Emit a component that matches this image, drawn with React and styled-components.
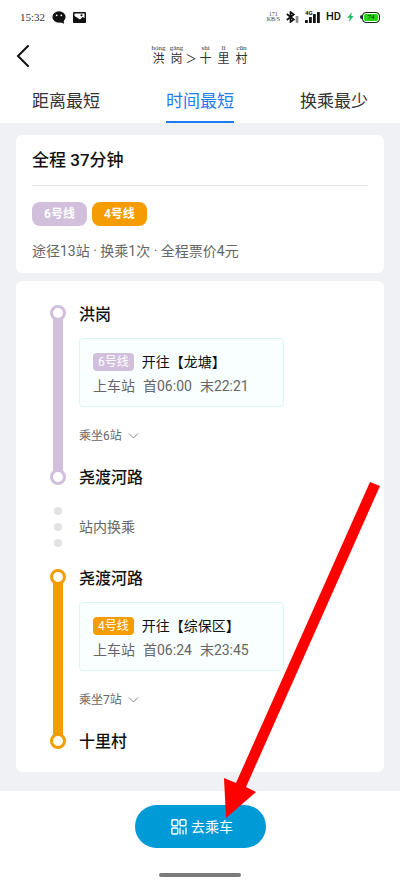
import styled, { createGlobalStyle } from "styled-components";

const GlobalStyle = createGlobalStyle`
  * {
    box-sizing: border-box;
  }
  body {
    margin: 0;
    background: #fff;
    color: #111;
    font-family: Roboto, "Noto Sans CJK SC", sans-serif;
    font-size: 14px;
    line-height: 20px;
  }
  button {
    margin: 0;
    padding: 0;
    border: 0;
    background: none;
    color: inherit;
    font: inherit;
    cursor: pointer;
  }
  h1, h2, h3, p {
    margin: 0;
    font-weight: inherit;
  }
  svg {
    display: block;
    flex: none;
  }
`;

const Page = styled.div`
  position: relative;
  display: flex;
  flex-direction: column;
  min-height: 100vh;
`;

const StatusBar = styled.div`
  display: flex;
  align-items: center;
  justify-content: space-between;
  height: 34px;
  padding: 0 20px;
`;

const StatusGroup = styled.div`
  display: flex;
  align-items: center;
  gap: ${(p) => p.$gap}px;
`;

const Clock = styled.span`
  font: 11px/16px "Liberation Serif", serif;
  color: #333;
`;

const NetSpeed = styled.span`
  display: flex;
  flex-direction: column;
  align-items: center;
  font: 6px/5px "Liberation Serif", serif;
  color: #444;
`;

const Signal = styled.span`
  position: relative;
  span {
    position: absolute;
    left: 0;
    top: -1px;
    font: bold 6px/6px Roboto, sans-serif;
  }
`;

const Hd = styled.span`
  font: 500 11px/16px Roboto, sans-serif;
  color: #111;
`;

const Battery = styled.span`
  display: flex;
  align-items: center;
  span {
    display: flex;
    align-items: center;
    justify-content: center;
    width: 18px;
    height: 11px;
    border: 1px solid #222;
    border-radius: 4px;
    background: #22d80e;
    box-shadow: inset 0 0 0 1px #fff;
    font: 7px/8px "Liberation Serif", serif;
  }
  &::before {
    content: "";
    width: 2px;
    height: 4px;
    border-radius: 2px 0 0 2px;
    background: #222;
  }
`;

const Header = styled.header`
  display: grid;
  grid-template-columns: 1fr auto 1fr;
  align-items: center;
  height: 43px;
  padding: 0 16px;
`;

const Title = styled.h1`
  display: flex;
  align-items: flex-end;
  font: 12px/14px "Liberation Serif", "Noto Sans CJK SC", serif;
  color: #333;
`;

const Pinyin = styled.ruby`
  display: flex;
  flex-direction: column-reverse;
  align-items: center;
  width: 18px;
  rt {
    display: block;
    font-size: 7px;
    line-height: 7px;
  }
`;

const Separator = styled.span`
  width: 11px;
  text-align: center;
  font-size: 18px;
`;

const Tabs = styled.nav`
  display: flex;
  justify-content: space-between;
  height: 46px;
  padding: 0 32px;
`;

const Tab = styled.button`
  padding-top: 4px;
  border-bottom: 2px solid ${(p) => (p.$active ? "#1f7cf2" : "transparent")};
  color: ${(p) => (p.$active ? "#1f7cf2" : "#333")};
  font-size: 17px;
  line-height: 24px;
`;

const Main = styled.main`
  display: flex;
  flex: 1;
  flex-direction: column;
  gap: 8px;
  padding: 12px 16px 19px;
  background: #f0f1f5;
`;

const Card = styled.section`
  border-radius: 6px;
  background: #fff;
`;

const Summary = styled(Card)`
  padding: 0 16px 12px;
`;

const Total = styled.h2`
  padding: 13px 0;
  border-bottom: 1px solid #e6e6e8;
  font-size: 17px;
  font-weight: 500;
  line-height: 24px;
`;

const Lines = styled.div`
  display: flex;
  gap: 5px;
  margin: 16px 0 15px;
`;

const LinePill = styled.span`
  padding: 0 12px;
  border-radius: 8px;
  background: ${(p) => p.$color};
  color: #fff;
  font-size: 12px;
  font-weight: 700;
  line-height: 24px;
`;

const Muted = styled.p`
  color: #666;
`;

const Route = styled(Card)`
  padding: 24px 34px 20px;
`;

const Leg = styled.div`
  display: flex;
  gap: 13px;
`;

const Rail = styled.div`
  display: flex;
  flex: none;
  flex-direction: column;
  align-items: center;
  width: 16px;
  padding-bottom: 3px;
`;

const Ring = styled.span`
  width: 16px;
  height: 16px;
  border: 3px solid ${(p) => p.$color};
  border-radius: 50%;
`;

const Bar = styled.span`
  flex: 1;
  width: 10px;
  margin: -2px 0;
  background: ${(p) => p.$color};
`;

const Stops = styled.div`
  display: flex;
  flex-direction: column;
  align-items: flex-start;
`;

const Station = styled.h3`
  font-size: 16px;
  font-weight: 500;
`;

const Train = styled.div`
  width: 205px;
  max-width: 100%;
  margin: 13px 0 19px;
  padding: 11px 13px 8px;
  border: 1px solid #dcf5f6;
  border-radius: 4px;
  background: #f9fefe;
  line-height: 24px;
`;

const TrainRow = styled.div`
  display: flex;
  align-items: center;
  gap: 8px;
  color: ${(p) => (p.$muted ? "#666" : "#111")};
  white-space: nowrap;
`;

const LineTag = styled.span`
  padding: 0 5px;
  border-radius: 4px;
  background: ${(p) => p.$color};
  color: #fff;
  font-size: 12px;
  line-height: 18px;
`;

const StopCount = styled.button`
  display: flex;
  align-items: center;
  gap: 6px;
  margin-bottom: 22px;
  color: #666;
  font-size: 12px;
`;

const Transfer = styled(Leg)`
  align-items: center;
  padding: 19px 0 22px;
`;

const Dots = styled.div`
  display: flex;
  flex-direction: column;
  align-items: center;
  gap: 8px;
  width: 16px;
  span {
    width: 8px;
    height: 8px;
    border-radius: 50%;
    background: #e2e2e2;
  }
`;

const Footer = styled.footer`
  display: flex;
  flex-direction: column;
  align-items: center;
  justify-content: space-between;
  height: 97px;
  padding: 14px 0 11px;
`;

const RideButton = styled.button`
  display: flex;
  align-items: center;
  justify-content: center;
  gap: 4px;
  width: 131px;
  height: 43px;
  padding-left: 4px;
  border-radius: 22px;
  background: #009ad6;
  color: #fff;
`;

const HomeBar = styled.span`
  width: 82px;
  height: 4px;
  border-radius: 2px;
  background: #7b7b7b;
`;

const Pointer = styled.svg`
  position: absolute;
  left: calc(50% + 24px);
  bottom: 70px;
  pointer-events: none;
`;

const PURPLE = "#d1bfdb";
const ORANGE = "#f49c00";

const legs = [
  {
    line: "6号线",
    color: PURPLE,
    from: "洪岗",
    to: "尧渡河路",
    towards: "龙塘",
    first: "06:00",
    last: "22:21",
    stops: 6,
  },
  {
    line: "4号线",
    color: ORANGE,
    from: "尧渡河路",
    to: "十里村",
    towards: "综保区",
    first: "06:24",
    last: "23:45",
    stops: 7,
  },
];

const ChatIcon = () => (
  <svg width="14" height="13" viewBox="0 0 14 13">
    <ellipse cx="7" cy="6" rx="6.600" ry="5.700" fill="#111" />
    <path d="M8 11l4 1.800-.5-4z" fill="#111" />
    <circle cx="4.700" cy="4.300" r="0.900" fill="#fff" />
    <circle cx="9.300" cy="4.300" r="0.900" fill="#fff" />
  </svg>
);

const PhotoIcon = () => (
  <svg width="13" height="11" viewBox="0 0 13 11">
    <rect width="13" height="11" rx="1" fill="#111" />
    <path d="M1.500 1.500h10v4.500L9.500 5 7 7.500 1.500 4z" fill="#fff" />
    <circle cx="8.500" cy="3.300" r="1.100" fill="#111" />
  </svg>
);

const BluetoothIcon = () => (
  <svg width="13" height="12" viewBox="0 0 13 12" fill="none" stroke="#111" strokeWidth="1.700">
    <path d="M0.800 3l7 5.500-3.300 2.500V1l3.300 2.500-7 5.500" />
    <rect x="10" y="5.500" width="2" height="6" fill="#999" stroke="#777" strokeWidth="0.600" />
  </svg>
);

const SignalIcon = () => (
  <svg width="15" height="12" viewBox="0 0 15 12" fill="#111">
    <rect x="0" y="9" width="2.800" height="3" rx="0.500" />
    <rect x="4" y="6" width="2.800" height="6" rx="0.500" />
    <rect x="8" y="3" width="2.800" height="9" rx="0.500" />
    <rect x="12" y="1" width="2.800" height="11" rx="0.500" />
  </svg>
);

const BoltIcon = () => (
  <svg width="7" height="10" viewBox="0 0 7 10">
    <path d="M5 0L0.300 5.800h2.500L1.800 10l4.900-5.900H4z" fill="#1dbf5f" />
  </svg>
);

const BackIcon = () => (
  <svg width="13" height="22" viewBox="0 0 13 22" fill="none" stroke="#111" strokeWidth="2">
    <path d="M12 1L2 11l10 10" strokeLinecap="round" />
  </svg>
);

const ChevronDown = () => (
  <svg width="11" height="6" viewBox="0 0 11 6" fill="none" stroke="#888">
    <path d="M1 0.500l4.500 4.500L10 0.500" />
  </svg>
);

const CodeIcon = () => (
  <svg width="16" height="16" viewBox="0 0 16 16" fill="none" stroke="#fff" strokeWidth="1.500">
    <rect x="0.800" y="0.800" width="5.900" height="5.900" rx="1.200" />
    <rect x="9" y="0.800" width="5.900" height="5.900" rx="1.200" />
    <rect x="0.800" y="9" width="5.900" height="5.900" rx="1.200" />
    <path d="M9 8.500v7M12 11v4.500M15 8.500v7" strokeWidth="1.300" />
  </svg>
);

const RouteLeg = ({ leg }) => (
  <Leg>
    <Rail>
      <Ring $color={leg.color} />
      <Bar $color={leg.color} />
      <Ring $color={leg.color} />
    </Rail>
    <Stops>
      <Station>{leg.from}</Station>
      <Train>
        <TrainRow>
          <LineTag $color={leg.color}>{leg.line}</LineTag>
          <span>开往【{leg.towards}】</span>
        </TrainRow>
        <TrainRow $muted>
          <span>上车站</span>
          <span>首{leg.first}</span>
          <span>末{leg.last}</span>
        </TrainRow>
      </Train>
      <StopCount type="button">
        乘坐{leg.stops}站
        <ChevronDown />
      </StopCount>
      <Station>{leg.to}</Station>
    </Stops>
  </Leg>
);

const App = () => {
  return (
    <Page lang="zh-CN">
      <GlobalStyle />
      <StatusBar>
        <StatusGroup $gap={7}>
          <Clock>15:32</Clock>
          <ChatIcon />
          <PhotoIcon />
        </StatusGroup>
        <StatusGroup $gap={6}>
          <NetSpeed>
            <span>171</span>
            <span>KB/S</span>
          </NetSpeed>
          <BluetoothIcon />
          <Signal>
            <span>4G</span>
            <SignalIcon />
          </Signal>
          <Hd>HD</Hd>
          <BoltIcon />
          <Battery>
            <span>74</span>
          </Battery>
        </StatusGroup>
      </StatusBar>
      <Header>
        <button type="button" aria-label="返回">
          <BackIcon />
        </button>
        <Title>
          <Pinyin>洪<rt>hóng</rt></Pinyin>
          <Pinyin>岗<rt>gǎng</rt></Pinyin>
          <Separator>&gt;</Separator>
          <Pinyin>十<rt>shí</rt></Pinyin>
          <Pinyin>里<rt>lǐ</rt></Pinyin>
          <Pinyin>村<rt>cūn</rt></Pinyin>
        </Title>
      </Header>
      <Tabs>
        <Tab type="button">距离最短</Tab>
        <Tab type="button" $active aria-current="true">时间最短</Tab>
        <Tab type="button">换乘最少</Tab>
      </Tabs>
      <Main>
        <Summary>
          <Total>全程 37分钟</Total>
          <Lines>
            {legs.map((leg) => (
              <LinePill key={leg.line} $color={leg.color}>{leg.line}</LinePill>
            ))}
          </Lines>
          <Muted>途径13站 · 换乘1次 · 全程票价4元</Muted>
        </Summary>
        <Route>
          <RouteLeg leg={legs[0]} />
          <Transfer>
            <Dots>
              <span />
              <span />
              <span />
            </Dots>
            <Muted>站内换乘</Muted>
          </Transfer>
          <RouteLeg leg={legs[1]} />
        </Route>
      </Main>
      <Footer>
        <RideButton type="button">
          <CodeIcon />
          去乘车
        </RideButton>
        <HomeBar />
      </Footer>
      <Pointer width="157" height="336" viewBox="0 0 157 336" aria-hidden="true">
        <path d="M146 0l10 4L22 305l10 5L2 336 0 296l12 5z" fill="#fe0000" />
      </Pointer>
    </Page>
  );
};

export default App;
